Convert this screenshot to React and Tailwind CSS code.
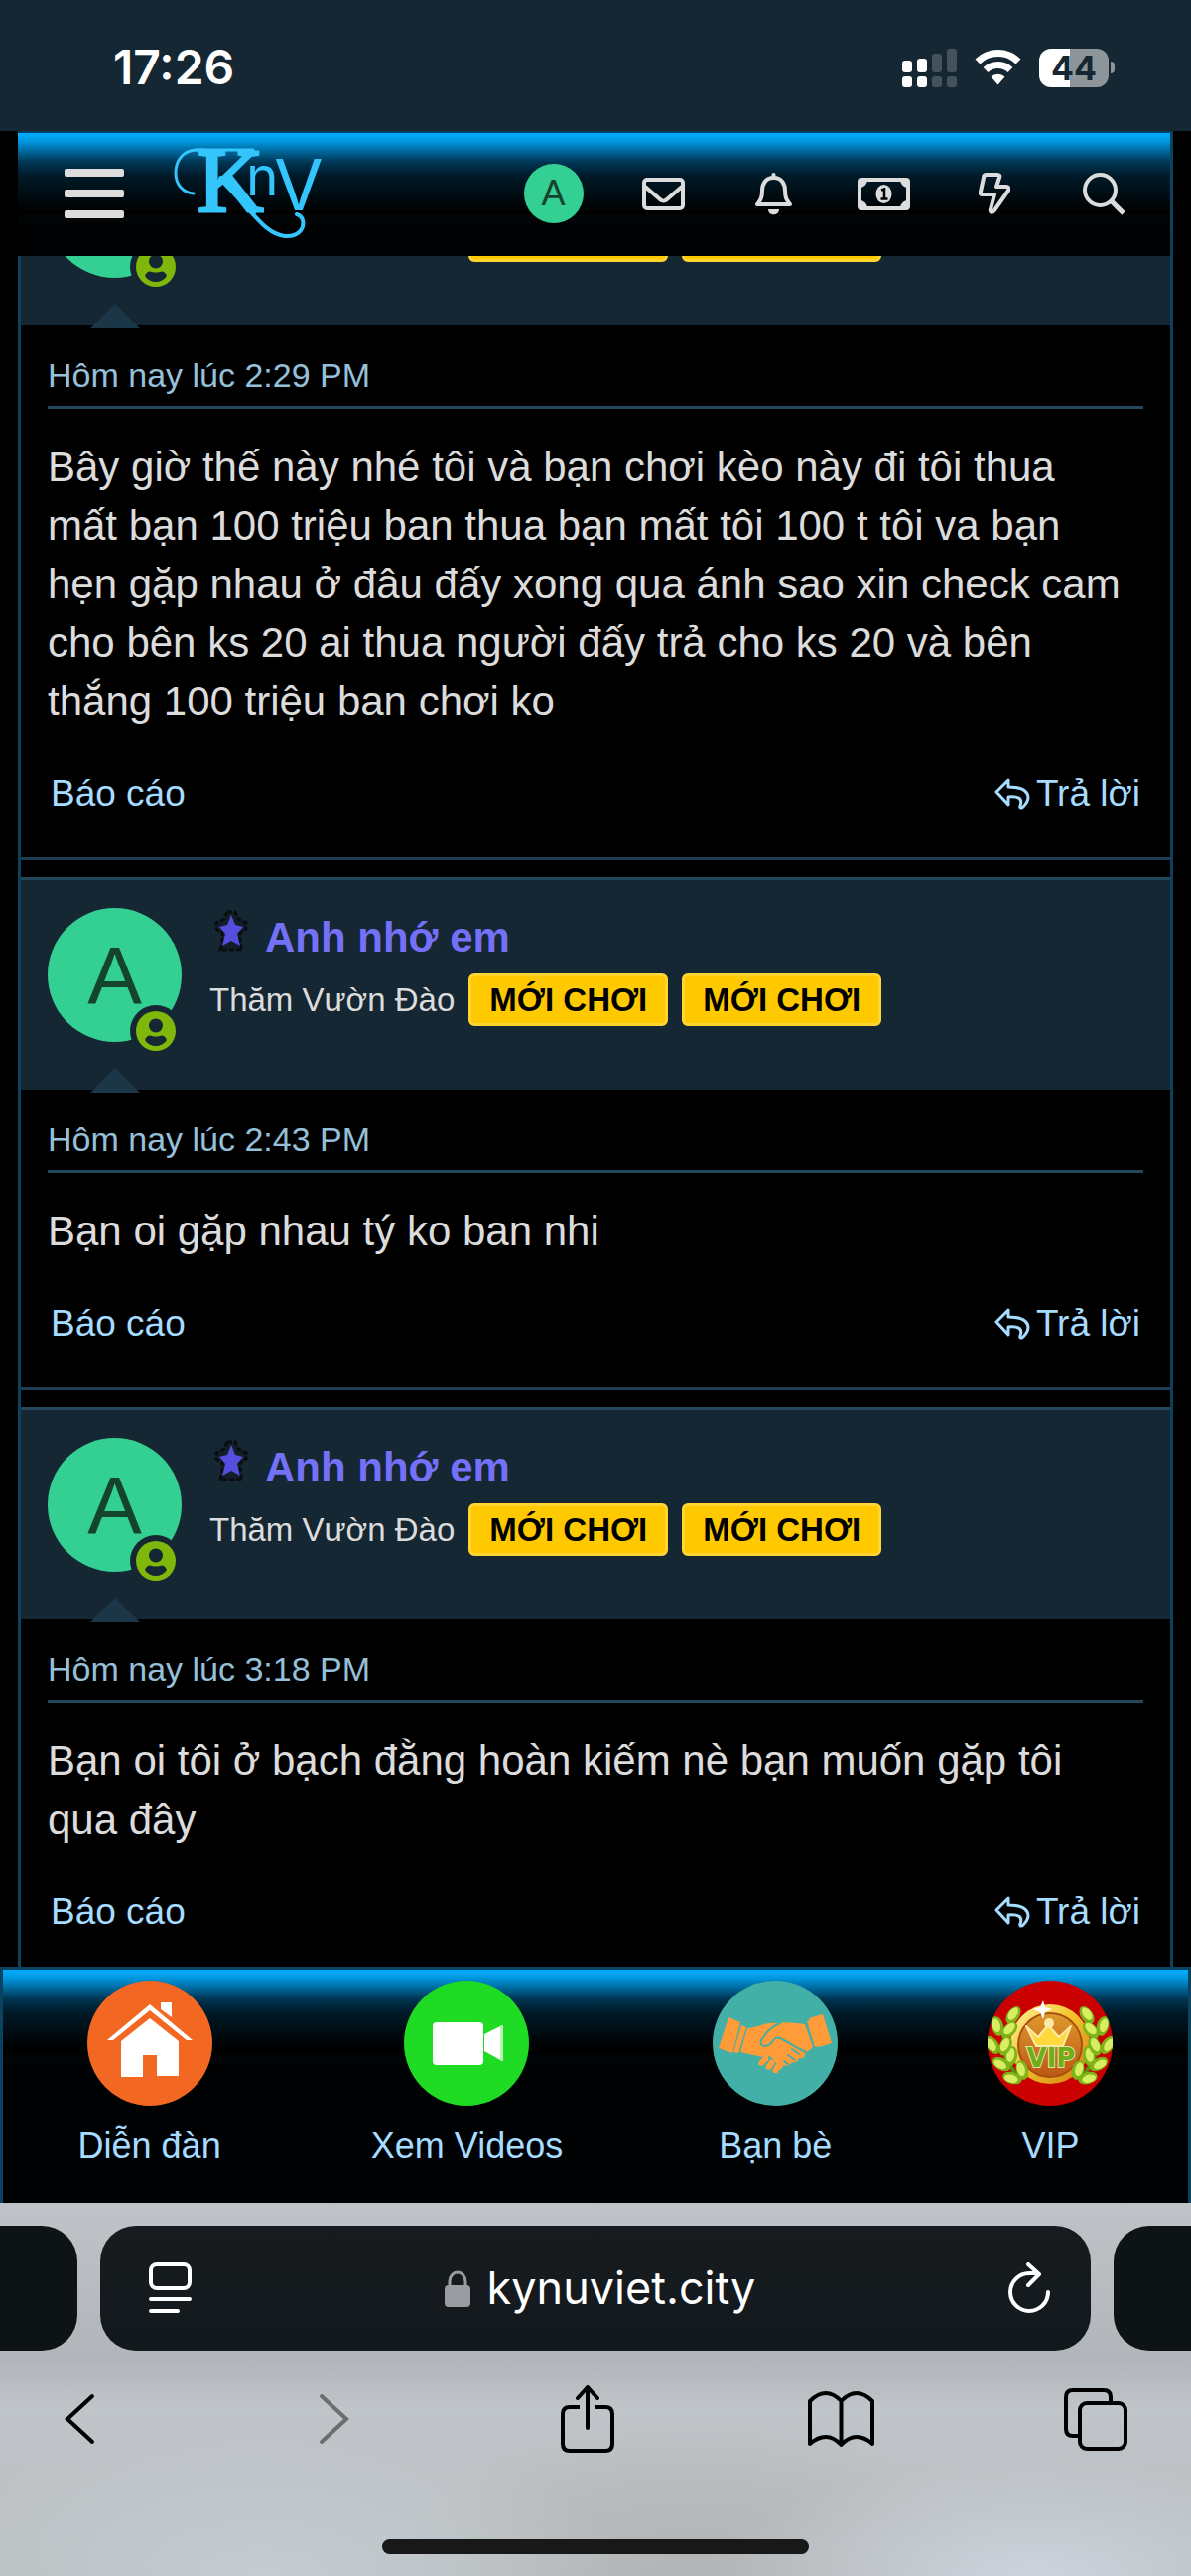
import React from 'react';

const posts = [
  {
    id: 1,
    time: 'Hôm nay lúc 2:29 PM',
    body: 'Bây giờ thế này nhé tôi và bạn chơi kèo này đi tôi thua mất bạn 100 triệu ban thua bạn mất tôi 100 t tôi va bạn hẹn gặp nhau ở đâu đấy xong qua ánh sao xin check cam cho bên ks 20 ai thua người đấy trả cho ks 20 và bên thắng 100 triệu ban chơi ko',
  },
  { id: 2, time: 'Hôm nay lúc 2:43 PM', body: 'Bạn oi gặp nhau tý ko ban nhi' },
  { id: 3, time: 'Hôm nay lúc 3:18 PM', body: 'Bạn oi tôi ở bạch đằng hoàn kiếm nè bạn muốn gặp tôi qua đây' },
];

/* ---------- Status bar ---------- */

const StatusBar = () => (
  <div className="flex h-[132px] shrink-0 items-center justify-between bg-[#152733] pr-[77px] pl-[114px] font-['Inter',sans-serif]">
    <span className="pt-1 text-[48px] font-semibold text-white">17:26</span>
    <div className="flex items-center gap-[18px] pt-1">
      <svg width="55" height="39" viewBox="0 0 55 39" fill="#fff">
        <rect x="0" y="12" width="10" height="12" rx="3" />
        <rect x="15" y="10" width="10" height="14" rx="3" />
        <rect x="0" y="28" width="10" height="11" rx="3" />
        <rect x="15" y="28" width="10" height="11" rx="3" />
        <g fill="#44525c">
          <rect x="30" y="5" width="10" height="19" rx="3" />
          <rect x="45" y="0" width="10" height="24" rx="3" />
          <rect x="30" y="28" width="10" height="11" rx="3" />
          <rect x="45" y="28" width="10" height="11" rx="3" />
        </g>
      </svg>
      <svg width="47" height="36" viewBox="0 0 47 36" fill="none" stroke="#fff">
        <path d="M3 12a29 29 0 0 1 41 0" strokeWidth="7" />
        <path d="M11 20.500a18 18 0 0 1 25 0" strokeWidth="7" />
        <path d="M23.500 35.500l-7-8a10 10 0 0 1 14 0z" fill="#fff" stroke="none" />
      </svg>
      <div className="flex items-center gap-0.5">
        <div className="flex h-[39px] w-[70px] items-center justify-center rounded-[12px] bg-[linear-gradient(90deg,#fff_44%,#8e959a_44%)] text-[34px] font-bold text-[#152733]">
          44
        </div>
        <div className="h-3 w-1 rounded-r-full bg-[#8e959a]"></div>
      </div>
    </div>
  </div>
);

/* ---------- Site header ---------- */

const Logo = () => (
  <svg width="149" height="92" viewBox="0 0 149 92" fill="#33c5fb" stroke="#33c5fb" className="overflow-visible">
    <text x="24" y="64" fontSize="92" strokeWidth="3" fontFamily="Liberation Serif, serif">K</text>
    <text x="73" y="48" fontSize="55" stroke="none" fontFamily="Inter, sans-serif">n</text>
    <text x="101" y="63" fontSize="72" stroke="none" fontFamily="Inter, sans-serif">V</text>
    <g fill="none" strokeLinecap="round">
      <path d="M32 2H22C9 3 2 13 2 25c0 13 8 20 18 21" strokeWidth="3" />
      <path d="M22 2h58" strokeWidth="3" />
      <path d="M48 31l32 34" strokeWidth="6" />
      <path d="M70 56c14 15 25 31 42 33c14 1 20-8 18-16c-1-4-3-5-6-6" strokeWidth="4" />
    </g>
  </svg>
);

const MailIcon = () => (
  <svg width="43" height="33" viewBox="0 0 43 33" fill="none" stroke="#dcdcdc" strokeWidth="4">
    <rect x="2" y="2" width="39" height="29" rx="3" />
    <path d="M3 9l15 13c2 2 5 2 7 0L40 9" />
  </svg>
);

const BellIcon = () => (
  <svg width="37" height="43" viewBox="0 0 37 43" fill="none" stroke="#dcdcdc" strokeWidth="4" strokeLinejoin="round">
    <path d="M18.500 2v3" strokeLinecap="round" />
    <path d="M18.500 5C10 5 7 12 7 18c0 8-2 10-5 14h33c-3-4-5-6-5-14c0-6-3-13-11.500-13z" />
    <path d="M13 37h11c0 7-11 7-11 0z" fill="#dcdcdc" stroke="none" />
  </svg>
);

const MoneyIcon = () => (
  <svg width="53" height="33" viewBox="0 0 53 33">
    <rect x="2" y="2" width="49" height="29" rx="2" fill="none" stroke="#dcdcdc" strokeWidth="4" />
    <path d="M2 2h8a8 8 0 0 1-8 8zM51 2h-8a8 8 0 0 0 8 8zM2 31h8a8 8 0 0 0-8-8zM51 31h-8a8 8 0 0 1 8-8z" fill="#dcdcdc" />
    <ellipse cx="26.500" cy="16.500" rx="8" ry="9.500" fill="#dcdcdc" />
    <path d="M24 12.500l3-1v10M23.500 21.500h7" fill="none" stroke="#000" strokeWidth="2.500" />
  </svg>
);

const BoltIcon = () => (
  <svg width="32" height="42" viewBox="0 0 32 42" fill="none" stroke="#dcdcdc" strokeWidth="4" strokeLinejoin="round">
    <path d="M8 2h11c2 0 3 1 2 3l-3 9h10c2 0 3 2 2 4L16 38c-2 3-5 2-4-1l4-15H4c-2 0-3-1-2-3L5 5c0-2 1-3 3-3z" />
  </svg>
);

const SearchIcon = () => (
  <svg width="43" height="43" viewBox="0 0 43 43" fill="none" stroke="#dcdcdc" strokeWidth="4">
    <circle cx="17.500" cy="17.500" r="15.500" />
    <path d="M28.500 28.500L41 41" strokeWidth="5" />
  </svg>
);

const actions = [
  { label: 'Hộp thư', Icon: MailIcon },
  { label: 'Thông báo', Icon: BellIcon },
  { label: 'Tài khoản', Icon: MoneyIcon },
  { label: 'Có gì mới', Icon: BoltIcon },
  { label: 'Tìm kiếm', Icon: SearchIcon },
];

const SiteHeader = () => (
  <header className="relative z-10 flex h-[126px] items-center justify-between border-t-2 border-[#063d5c] bg-[linear-gradient(#00aeff_0,#0098e0_8px,#006597_19px,#003756_29px,#001a28_43px,#000_80px,#030608_86px,#000103_96px)] pr-[11px] pb-0.5 pl-[47px]">
    <div className="flex items-center gap-[50px]">
      <button type="button" aria-label="Menu" className="flex flex-col gap-[13px]">
        <span className="h-2 w-[60px] rounded-[2px] bg-[#dcdcdc]"></span>
        <span className="h-2 w-[60px] rounded-[2px] bg-[#dcdcdc]"></span>
        <span className="h-2 w-[60px] rounded-[2px] bg-[#dcdcdc]"></span>
      </button>
      <a href="#" aria-label="KnV">
        <Logo />
      </a>
    </div>
    <div className="flex items-center">
      <button type="button" className="flex w-[111px] justify-center">
        <span className="flex size-[60px] items-center justify-center rounded-full bg-[#34cf92] text-[36px] text-[#14442b]">A</span>
      </button>
      {actions.map(({ label, Icon }) => (
        <button key={label} type="button" aria-label={label} className="flex w-[111px] justify-center">
          <Icon />
        </button>
      ))}
    </div>
  </header>
);

/* ---------- Posts ---------- */

const StarIcon = () => (
  <svg width="36" height="42" viewBox="0 0 36 42">
    <path
      d="M14 2h8l3 7l8 4v6l-6 4v10l2 7H7l2-7V23l-6-4v-6l8-4z"
      fill="#121e28"
      stroke="#090c10"
      strokeWidth="3"
      strokeDasharray="5 2"
    />
    <path d="M18 5l4 10l8 2l-6 7l3 12l-9-5l-9 5l3-12l-6-7l8-2z" fill="#554fe0" />
  </svg>
);

const OnlineBadge = () => (
  <svg width="52" height="54" viewBox="0 0 52 54" className="absolute right-0 -bottom-4">
    <circle cx="26" cy="27" r="26" fill="#152733" />
    <circle cx="26" cy="27" r="20" fill="#80b70b" />
    <circle cx="26" cy="21.500" r="7" fill="#152733" />
    <path d="M15 36c2-5 5-5 7-4q4 1 8 0c2-1 5-1 7 4c-5 8-17 8-22 0z" fill="#152733" />
  </svg>
);

const Rank = ({ children }) => (
  <span className="rounded-[6px] border-[3px] border-[#ffd533] bg-[#ffc900] px-[18px] text-[33px] leading-[47px] font-bold text-black">
    {children}
  </span>
);

const ReplyIcon = () => (
  <svg width="36" height="32" viewBox="0 0 36 32" fill="none" stroke="#a6dcff" strokeWidth="3" strokeLinejoin="round">
    <path d="M14 2L2 14l12 13v-8c9-1 15 1 12 9c-1 2 1 3 3 1c8-8 8-20-15-20z" />
  </svg>
);

const Post = ({ time, body }) => (
  <article className="mb-[17px] border-b-[3px] border-[#1c3d52]">
    <div className="relative flex gap-7 border-t-[3px] border-[#24475e] bg-[#152733] px-[27px] pt-7 pb-12">
      <a href="#" className="relative flex size-[135px] shrink-0 items-center justify-center rounded-full bg-[#34cf92] text-[82px] text-[#14442b]">
        A
        <OnlineBadge />
      </a>
      <div className="pt-0.5">
        <div className="flex items-start gap-4 pl-1">
          <StarIcon />
          <a href="#" className="text-[42px] leading-[56px] font-bold text-[#7471f8]">Anh nhớ em</a>
        </div>
        <div className="mt-2 flex items-center gap-3.5 text-[33px] text-[#dcdcdc]">
          <span>Thăm Vườn Đào</span>
          <Rank>MỚI CHƠI</Rank>
          <Rank>MỚI CHƠI</Rank>
        </div>
      </div>
      {/* Pointer under the avatar */}
      <div className="absolute -bottom-[3px] left-[70px] h-[25px] w-[50px] bg-[#1b3646] [clip-path:polygon(50%_0,100%_100%,0_100%)]"></div>
    </div>
    <div className="px-[27px] pt-[26px] pb-10">
      <div className="border-b-[3px] border-[#24475e] pb-[7px] text-[34px] leading-[48px] text-[#96c0d9]">
        <time>{time}</time>
      </div>
      <p className="mt-[29px] pr-4 text-[42px] leading-[59px] text-[#dcdcdc]">{body}</p>
      <div className="mt-10 flex items-center justify-between px-[3px] text-[37px] leading-[48px] text-[#a6dcff]">
        <a href="#">Báo cáo</a>
        <a href="#" className="flex items-center gap-1.5">
          <ReplyIcon />
          Trả lời
        </a>
      </div>
    </div>
  </article>
);

/* ---------- Bottom navigation ---------- */

const HomeIcon = () => (
  <svg width="126" height="126" viewBox="0 0 126 126" fill="#fff">
    <circle cx="63" cy="63" r="63" fill="#f26722" />
    <path d="M74 22h11v15l-11-8z" />
    <path d="M20 60l43-36l43 36h-6L63 30L26 60z" />
    <path d="M63 38l29 23v35H70V75H56v22H34V61z" />
  </svg>
);

const VideoIcon = () => (
  <svg width="126" height="126" viewBox="0 0 126 126" fill="#fff">
    <circle cx="63" cy="63" r="63" fill="#1fdb23" />
    <rect x="29" y="42" width="51" height="43" rx="4" />
    <path d="M81 54l18-9v36l-18-10z" />
    <path d="M97 46l3-1v36l-3-1z" fill="#b5f4b6" />
  </svg>
);

const FriendsIcon = () => (
  <svg width="126" height="126" viewBox="0 0 126 126" fill="#ff9b38">
    <circle cx="63" cy="63" r="63" fill="#42b0a6" />
    <path d="M16 37l12 5l-8 31l-14-5z" />
    <path d="M29 45l5 2l-8 26l-5-1z" />
    <path d="M111 34l9 29l-13 4l-10-29z" />
    <path d="M95 41l4-1l8 26l-4 1z" />
    <path d="M35 48c10 0 18-7 31-5c8-2 20 0 27 1l8 23c-5 4-7 6-8 7c0 4-3 5-6 4c-1 4-4 5-7 4c-2 4-5 5-8 3l-3 4c-3 1-5-1-4-4l-3-5c-3-4-8-6-11-3L28 72z" />
    <path d="M47 81l5-5c3-2 6 1 4 4l-5 5c-4 2-6-1-4-4zM54 85l4-5c3-2 6 1 4 4l-3 5c-4 2-7-1-5-4zM61 89l2-4c3-3 7 0 5 3l-2 4c-3 3-7 0-5-3z" />
    <path d="M68 43c-10 4-13 8-19 17c-2 5 3 8 9 4c4-4 4-8 10-6c10 5 17 10 26 14M80 69l7 5M76 75l7 5M72 81l5 4" fill="none" stroke="#42b0a6" strokeWidth="2" strokeLinecap="round" />
  </svg>
);

const leaves = [
  [26, 35, 35], [10, 46, -15], [22, 50, 45], [5, 65, -35], [24, 76, 10],
  [14, 84, -60], [35, 90, -15], [25, 98, -75], [18, 66, 25],
];

const Laurel = () => (
  <g>
    <path d="M28 38C12 55 10 75 34 100" fill="none" stroke="#5b8f10" strokeWidth="4" />
    {leaves.map(([x, y, angle]) => (
      <g key={`${x}-${y}`} transform={`translate(${x} ${y}) rotate(${angle})`}>
        <ellipse rx="6" ry="10" fill="#7fb31a" />
        <ellipse cx="-1" cy="-1" rx="4" ry="7" fill="#d8ee62" />
      </g>
    ))}
  </g>
);

const VipIcon = () => (
  <svg width="126" height="126" viewBox="0 0 126 126">
    <defs>
      <linearGradient id="ring" x1="0" y1="0" x2="1" y2="1">
        <stop offset="0" stopColor="#fff3a0" />
        <stop offset="0.450" stopColor="#f5c52c" />
        <stop offset="1" stopColor="#cf7a12" />
      </linearGradient>
      <linearGradient id="coin" x1="0" y1="0" x2="0" y2="1">
        <stop offset="0" stopColor="#dd9a2c" />
        <stop offset="1" stopColor="#bd5714" />
      </linearGradient>
    </defs>
    <circle cx="63" cy="63" r="63" fill="#cb0000" />
    <circle cx="63" cy="64" r="40" fill="url(#ring)" />
    <circle cx="63" cy="65" r="32" fill="url(#coin)" stroke="#a84e10" strokeWidth="2" />
    <path d="M39 46l12 11l10-12l11 12l12-11l-8 20H49z" fill="#ffd93b" stroke="#ffe9a8" strokeWidth="2" strokeLinejoin="round" />
    <circle cx="62" cy="43" r="5" fill="#ffe9a8" />
    <Laurel />
    <g transform="translate(126 0) scale(-1 1)">
      <Laurel />
    </g>
    <text x="64" y="87" textAnchor="middle" fontSize="26" fontWeight="700" fill="#6fae18" stroke="#dfe8a0" strokeWidth="2" paintOrder="stroke" fontFamily="DejaVu Sans, sans-serif">
      VIP
    </text>
    <path d="M56 20l2 7l7 2l-7 3l-2 7l-3-7l-7-3l7-2z" fill="#fff" />
  </svg>
);

const tabs = [
  { label: 'Diễn đàn', Icon: HomeIcon },
  { label: 'Xem Videos', Icon: VideoIcon },
  { label: 'Bạn bè', Icon: FriendsIcon },
  { label: 'VIP', Icon: VipIcon },
];

const BottomNav = () => (
  <nav className="flex h-[238px] shrink-0 justify-around border-x-[3px] border-t-[3px] border-[#0b4260] bg-[linear-gradient(#00aeff_0,#0098e0_8px,#006597_19px,#003756_29px,#001a28_43px,#000_80px,#030608_92px,#000103_96px)] pt-[11px]">
    {tabs.map(({ label, Icon }) => (
      <a key={label} href="#" className="flex flex-col items-center gap-[17px] text-[36px] leading-[48px] text-[#a6dcff]">
        <Icon />
        {label}
      </a>
    ))}
  </nav>
);

/* ---------- Browser toolbar ---------- */

const BrowserBar = () => (
  <footer className="flex h-[376px] shrink-0 flex-col bg-[radial-gradient(ellipse_at_87%_100%,#cbd3dc_0,transparent_22%),radial-gradient(ellipse_at_22%_100%,#c5cdd2_0,transparent_28%),radial-gradient(ellipse_at_58%_100%,#b3b4b5_0,transparent_30%),linear-gradient(#bec3c7,#b2b6ba_42%,#bfc4c9_55%,#b9bdbf)] font-['Inter',sans-serif]">
    <div className="mt-[23px] flex h-[126px] gap-[23px]">
      <div className="w-[78px] rounded-r-[36px] bg-[#0e1316]"></div>
      <div className="flex flex-1 items-center justify-between rounded-[36px] bg-[linear-gradient(#171b1f,#12191c)] pr-[41px] pl-[49px]">
        <button type="button" aria-label="Page settings">
          <svg width="43" height="52" viewBox="0 0 43 52" fill="none" stroke="#fff" strokeWidth="4" strokeLinecap="round">
            <rect x="2" y="2" width="39" height="24" rx="6" />
            <path d="M2 37h39M2 49h27" />
          </svg>
        </button>
        <div className="flex items-center gap-[17px] text-[45px] text-white">
          <svg width="26" height="37" viewBox="0 0 26 37">
            <path d="M5 17V11a8 9 0 0 1 16 0v6" fill="none" stroke="#9a9ca1" strokeWidth="3" />
            <rect x="0" y="15" width="26" height="22" rx="4" fill="#9a9ca1" />
          </svg>
          kynuviet.city
        </div>
        <button type="button" aria-label="Reload">
          <svg width="42" height="52" viewBox="0 0 42 52" fill="none" stroke="#fff" strokeWidth="4" strokeLinecap="round" strokeLinejoin="round">
            <path d="M40 30a19 19 0 1 1-19-19h8" />
            <path d="M20 2l11 10l-11 11" />
          </svg>
        </button>
      </div>
      <div className="w-[78px] rounded-l-[36px] bg-[#0e1316]"></div>
    </div>
    <div className="mt-[34px] flex h-[70px] items-center justify-between pr-[63px] pl-[47px]">
      <button type="button" aria-label="Back" className="flex w-[67px] justify-center">
        <svg width="31" height="52" viewBox="0 0 31 52" fill="none" stroke="#000" strokeWidth="4" strokeLinecap="round">
          <path d="M28 3L3 26l25 23" />
        </svg>
      </button>
      <button type="button" aria-label="Forward" disabled className="flex w-[67px] justify-center">
        <svg width="31" height="52" viewBox="0 0 31 52" fill="none" stroke="#6b6e71" strokeWidth="4" strokeLinecap="round">
          <path d="M3 3l25 23L3 49" />
        </svg>
      </button>
      <button type="button" aria-label="Share" className="flex w-[67px] justify-center">
        <svg width="54" height="68" viewBox="0 0 54 68" fill="none" stroke="#000" strokeWidth="4" strokeLinecap="round" strokeLinejoin="round">
          <path d="M19 22H9q-7 0-7 7v30q0 7 7 7h36q7 0 7-7V29q0-7-7-7H35" strokeLinecap="butt" />
          <path d="M27 43V3M17 13L27 2l10 11" />
        </svg>
      </button>
      <button type="button" aria-label="Bookmarks" className="flex w-[67px] justify-center">
        <svg width="67" height="56" viewBox="0 0 67 56" fill="none" stroke="#000" strokeWidth="4" strokeLinejoin="round">
          <path d="M33.500 10Q26 2 18 2T2 10v43q8-7 16-7t15.500 8Q41 46 49 46t16 7V10Q57 2 49 2t-15.500 8v44" />
        </svg>
      </button>
      <button type="button" aria-label="Tabs" className="flex w-[67px] justify-center">
        <svg width="64" height="63" viewBox="0 0 64 63" fill="none" stroke="#000" strokeWidth="4">
          <path d="M15 48H9q-7 0-7-7V9q0-7 7-7h31q7 0 7 7v5" />
          <rect x="16" y="15" width="46" height="46" rx="7" />
        </svg>
      </button>
    </div>
    <div className="mx-auto mt-auto mb-[22px] h-[15px] w-[430px] rounded-full bg-[#181818]"></div>
  </footer>
);

const App = () => {
  return (
    <div className="flex h-screen flex-col bg-black font-['Liberation_Sans',Arial,sans-serif]">
      <StatusBar />
      <div className="mx-[18px] min-h-0 flex-1 overflow-hidden border-r-[3px] border-[#0b4260]">
        <SiteHeader />
        {/* The thread is scrolled so the first post starts behind the header */}
        <main className="-mt-36 border-l-[3px] border-[#0b4260]">
          {posts.map((post) => (
            <Post key={post.id} time={post.time} body={post.body} />
          ))}
        </main>
      </div>
      <BottomNav />
      <BrowserBar />
    </div>
  );
};

export default App;
